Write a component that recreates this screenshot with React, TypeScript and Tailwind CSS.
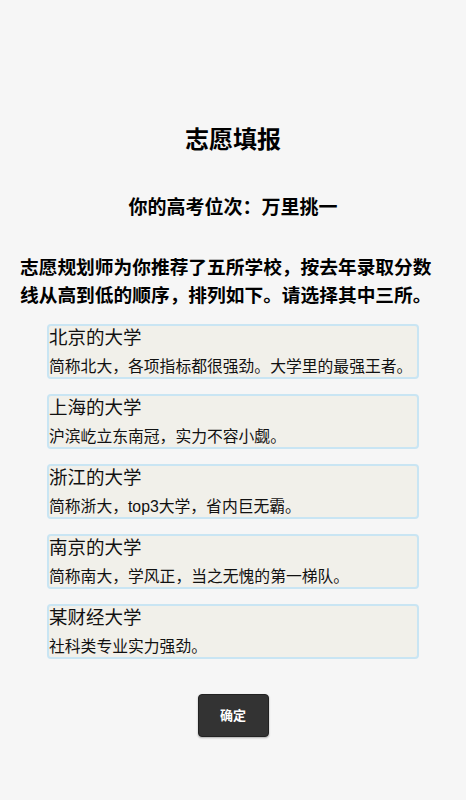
const schools = [
  { name: "北京的大学", desc: "简称北大，各项指标都很强劲。大学里的最强王者。" },
  { name: "上海的大学", desc: "沪滨屹立东南冠，实力不容小觑。" },
  { name: "浙江的大学", desc: "简称浙大，top3大学，省内巨无霸。" },
  { name: "南京的大学", desc: "简称南大，学风正，当之无愧的第一梯队。" },
  { name: "某财经大学", desc: "社科类专业实力强劲。" },
];

export default function App() {
  return (
    <div
      className="min-h-[800px] w-full bg-[#f6f6f6] text-black"
      style={{ fontFamily: '"Liberation Sans", "Noto Sans CJK SC", sans-serif' }}
    >
      <div className="pt-[124px]">
        <h2 className="text-center text-[24px] font-bold leading-[32px]">志愿填报</h2>
        <h3 className="mt-[38px] text-center text-[19px] font-bold leading-[28px]">
          你的高考位次：万里挑一
        </h3>
        <p className="mt-[32px] px-5 text-[18.72px] font-bold leading-[28px]">
          志愿规划师为你推荐了五所学校，按去年录取分数线从高到低的顺序，排列如下。请选择其中三所。
        </p>

        <ul className="mx-auto mt-[14px] flex w-[372px] flex-col gap-[15px]">
          {schools.map((s) => (
            <li
              key={s.name}
              className="h-[55px] rounded-[4px] border-2 border-[#c9e5f3] bg-[#f1f0ea]"
            >
              <div className="text-[18.5px] leading-[24px] text-[#111]">{s.name}</div>
              <div className="mt-[6px] whitespace-nowrap text-[15.8px] leading-[21px] text-[#111]">
                {s.desc}
              </div>
            </li>
          ))}
        </ul>

        <div className="mt-[35px] flex justify-center">
          <button className="h-[43px] w-[71px] rounded-[4px] border border-[#222] bg-[#333] text-[13px] font-bold text-white shadow-[0_1px_2px_rgba(0,0,0,0.3)]">
            确定
          </button>
        </div>
      </div>
    </div>
  );
}
